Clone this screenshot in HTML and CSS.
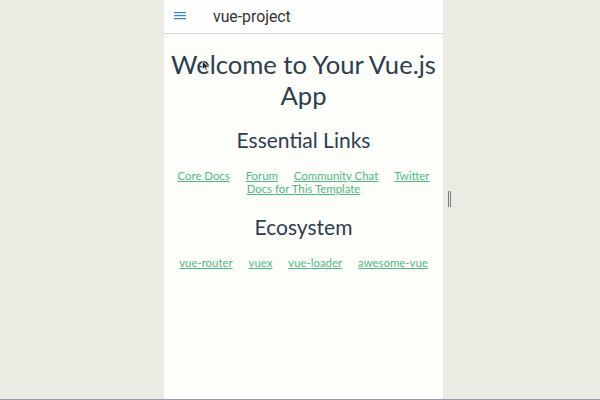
FILE: index.html
```html
<!DOCTYPE html>
<html>
<head>
<meta charset="utf-8">
<link rel="stylesheet" href="styles.css">
</head>
<body>
<div class="stage">
  <div class="panel">
    <header class="bar">
      <svg class="menu" width="12" height="8" viewBox="0 0 12 8"><rect x="0" y="0" width="12" height="1.2" fill="#2f7fe0"/><rect x="0" y="3" width="12" height="1.2" fill="#2f7fe0"/><rect x="0" y="6" width="12" height="1.2" fill="#2f7fe0"/></svg>
      <span class="title">vue-project</span>
    </header>
    <main class="hello">
      <h1>Welcome to Your Vue.js App</h1>
      <h2 class="first">Essential Links</h2>
      <ul class="links first">
        <li><a href="#">Core Docs</a></li>
        <li><a href="#">Forum</a></li>
        <li><a href="#">Community Chat</a></li>
        <li><a href="#">Twitter</a></li>
        <li><a href="#">Docs for This Template</a></li>
      </ul>
      <h2 class="second">Ecosystem</h2>
      <ul class="links second">
        <li><a href="#">vue-router</a></li>
        <li><a href="#">vuex</a></li>
        <li><a href="#">vue-loader</a></li>
        <li><a href="#">awesome-vue</a></li>
      </ul>
    </main>
    <svg class="cursor" width="8" height="11" viewBox="0 0 8 11"><path d="M0.5 0.5 L0.5 8.5 L2.6 6.6 L4 9.8 L5.3 9.2 L4 6.2 L7 6.2 Z" fill="#222" stroke="#fff" stroke-width="0.6"/></svg>
  </div>
  <div class="grip"><span></span><span></span></div>
</div>
</body>
</html>
```
FILE: styles.css
```css
html, body { margin: 0; padding: 0; }
body {
  width: 600px;
  height: 400px;
  overflow: hidden;
  background: #ecebe3;
  font-family: Lato, "Liberation Sans", sans-serif;
  color: #2c3e50;
}
.stage {
  position: relative;
  height: 399px;
  border-bottom: 1px solid #9a9aa6;
  display: flex;
}
.panel {
  position: relative;
  margin-left: 164px;
  width: 279px;
  height: 100%;
  background: #fdfdf9;
}
.bar {
  height: 33px;
  border-bottom: 1px solid #d6d6da;
  display: flex;
  align-items: center;
  background: #fefefe;
}
.menu { margin-left: 10px; margin-top: -1px; }
.title {
  margin-left: 27px;
  font-family: Roboto, sans-serif;
  font-size: 15.8px;
  color: #333;
  margin-top: -1px;
}
.hello { text-align: center; }
h1 {
  font-weight: normal;
  font-size: 25.6px;
  line-height: 31px;
  margin: 15px 0 0;
}
h2 {
  font-weight: normal;
  font-size: 21px;
  line-height: 24px;
}
h2.first { margin: 17px 0 0; }
h2.second { margin: 20px 0 0; }
.links {
  list-style: none;
  padding: 0;
  font-size: 11.4px;
  line-height: 13px;
}
.links.first { margin: 17px 0 0; }
.links.second { margin: 17px 0 0; }
.links li { display: inline-block; margin: 0 6.5px; }
.links a { color: #4dbb85; }
.cursor { position: absolute; left: 38px; top: 61px; }
.grip {
  position: absolute;
  left: 448px;
  top: 191px;
  display: flex;
  gap: 1px;
}
.grip span { width: 1px; height: 16px; background: #7a7a80; }
```
